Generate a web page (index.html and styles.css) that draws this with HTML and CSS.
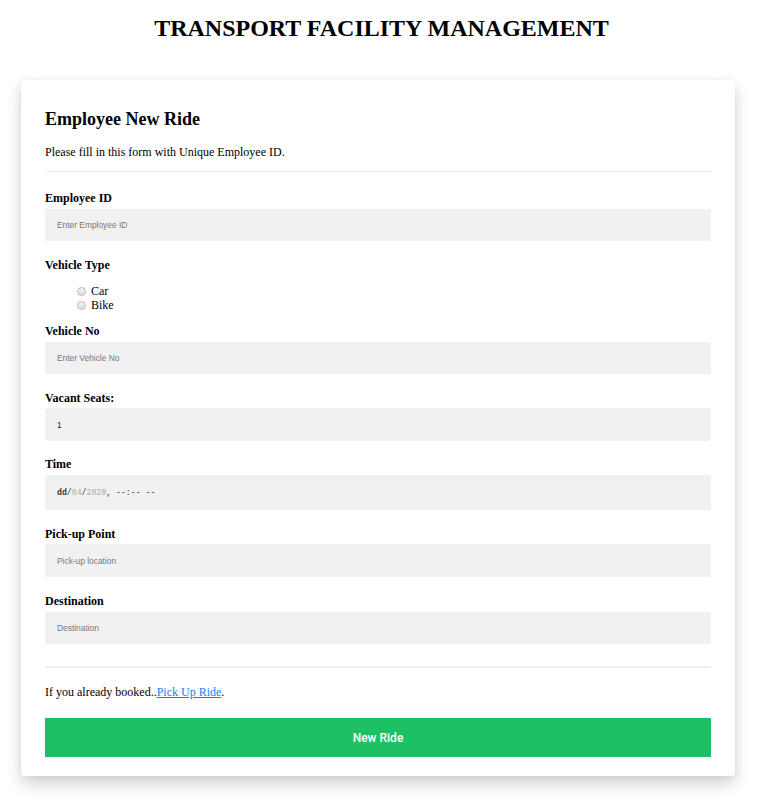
FILE: index.html
```html
<!DOCTYPE html>
<html>
<head>
<meta charset="utf-8">
<link rel="stylesheet" href="styles.css">
</head>
<body>
<h1 class="page-title">TRANSPORT FACILITY MANAGEMENT</h1>
<form class="card">
  <h2 class="card-title">Employee New Ride</h2>
  <p class="intro">Please fill in this form with Unique Employee ID.</p>
  <hr class="rule">
  <label class="label label-first">Employee ID</label>
  <input class="field" type="text" placeholder="Enter Employee ID">
  <label class="label">Vehicle Type</label>
  <div class="radios">
    <label class="radio-row"><input type="radio" name="vt" class="radio"> Car</label>
    <label class="radio-row"><input type="radio" name="vt" class="radio"> Bike</label>
  </div>
  <label class="label label-tight">Vehicle No</label>
  <input class="field" type="text" placeholder="Enter Vehicle No">
  <label class="label">Vacant Seats:</label>
  <input class="field field-num" type="text" value="1">
  <label class="label label-time">Time</label>
  <div class="field field-time"><span class="t-dark">dd</span>/<span class="t-light">04</span>/<span class="t-light">2020</span>, --:-- --</div>
  <label class="label">Pick-up Point</label>
  <input class="field field-snug" type="text" placeholder="Pick-up location">
  <label class="label">Destination</label>
  <input class="field" type="text" placeholder="Destination">
  <hr class="rule rule-bottom">
  <p class="signin">If you already booked..<a href="#">Pick Up Ride</a>.</p>
  <button class="submit" type="button">New Ride</button>
</form>
</body>
</html>
```
FILE: styles.css
```css
* { box-sizing: border-box; }
body {
  margin: 0;
  padding: 0 21px 40px 21px;
  background: #fff;
  font-family: "Liberation Serif", "Times New Roman", serif;
  color: #000;
}
.page-title {
  margin: 0;
  padding-top: 14px;
  text-align: center;
  font-size: 24px;
  font-weight: bold;
  line-height: 28px;
}
.card {
  margin-top: 38px;
  width: 714px;
  padding: 28px 24px 19px 24px;
  border-radius: 4px;
  background: #fff;
  box-shadow: 0 8px 16px rgba(0,0,0,0.18), 0 0 6px rgba(0,0,0,0.05);
  display: flex;
  flex-direction: column;
}
.card-title {
  margin: 0;
  font-size: 18px;
  line-height: 22px;
  font-weight: bold;
}
.intro {
  margin: 14px 0 0 0;
  font-size: 12px;
  line-height: 16px;
}
.rule {
  margin: 11px 0 0 0;
  border: 0;
  border-top: 1px solid #ececec;
  height: 0;
}
.rule-bottom {
  margin-top: 22px;
  border-top: 2px solid #efefef;
}
.label {
  display: block;
  margin-top: 16px;
  font-size: 12px;
  line-height: 16px;
  font-weight: bold;
}
.label-first { margin-top: 18px; }
.label-tight { margin-top: 11px; }
.label-time { margin-top: 15px; }
.field {
  display: block;
  width: 100%;
  height: 32px;
  margin-top: 3px;
  border: 0;
  outline: 0;
  background: #f1f1f1;
  padding: 0 12px;
  font-family: "Liberation Sans", Arial, sans-serif;
  font-size: 8.4px;
  color: #222;
}
.field::placeholder { color: #777; }
.field-snug { margin-top: 2px; height: 33px; }
.field-num {
  height: 33px;
  margin-top: 2px;
  border-radius: 4px;
}
.field-time {
  height: 35px;
  display: flex;
  align-items: center;
  font-family: "Liberation Mono", "Courier New", monospace;
  font-size: 8.2px;
  color: #333;
  white-space: pre;
}
.t-dark { color: #333; font-weight: bold; }
.t-light { color: #aaa; }
.radios {
  display: flex;
  flex-direction: column;
  padding-left: 32px;
  margin-top: 11px;
}
.radio-row {
  display: flex;
  align-items: center;
  font-size: 12px;
  line-height: 14px;
  gap: 5px;
}
.radio {
  appearance: none;
  -webkit-appearance: none;
  width: 9px;
  height: 9px;
  margin: 0;
  border-radius: 50%;
  border: 1px solid #b8b8b8;
  background: linear-gradient(#f4f4f4, #dcdcdc);
}
.signin {
  margin: 16px 0 0 0;
  font-size: 12px;
  line-height: 16px;
}
.signin a { color: #0a84ff; }
.submit {
  margin-top: 18px;
  height: 39px;
  width: 100%;
  border: 0;
  background: #1dc164;
  color: #fff;
  font-family: Roboto, "Liberation Sans", sans-serif;
  font-weight: 500;
  font-size: 12px;
}
```
